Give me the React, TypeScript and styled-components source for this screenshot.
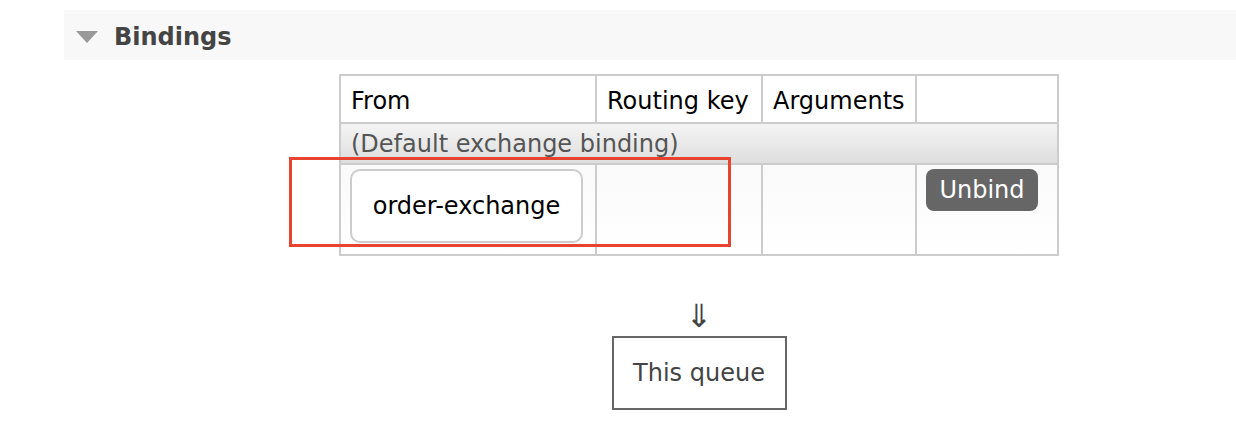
import styled, { createGlobalStyle } from "styled-components";

const GlobalStyle = createGlobalStyle`
  html, body {
    margin: 0;
    padding: 0;
    background: #ffffff;
    overflow: hidden;
  }
  body {
    font-family: "DejaVu Sans", Verdana, sans-serif;
    font-size: 24px;
    color: #000;
  }
`;

const Section = styled.section`
  margin: 10px 0 0 64px;
`;

const SectionHeader = styled.h2`
  display: flex;
  align-items: center;
  gap: 16px;
  margin: 0;
  box-sizing: border-box;
  height: 50px;
  padding: 4px 12px 0;
  background: #f8f8f8;
  color: #444;
  font-size: 24px;
  font-weight: bold;
`;

const Toggle = styled.span`
  width: 0;
  height: 0;
  border-left: 11px solid transparent;
  border-right: 11px solid transparent;
  border-top: 12px solid #999;
  margin-top: 0;
`;

const Body = styled.div`
  display: flex;
  flex-direction: column;
  align-items: center;
  padding: 14px 0 0 98px;
`;

const TableWrap = styled.div`
  position: relative;
`;

const Table = styled.table`
  border-collapse: collapse;
  border: 2px solid #ccc;
`;

const HeadCell = styled.th<{ $w: number }>`
  width: ${(p) => p.$w}px;
  box-sizing: border-box;
  border: 2px solid #ccc;
  height: 48px;
  padding: 4px 10px 0;
  text-align: left;
  font-weight: normal;
  background: #fff;
  white-space: nowrap;
`;

const GroupCell = styled.td`
  height: 39px;
  padding: 0 10px;
  border: 2px solid #ccc;
  color: #555;
  background: linear-gradient(#f4f4f4, #dedede);
`;

const DataRow = styled.tr`
  background: linear-gradient(#fafafa, #fff);
`;

const DataCell = styled.td`
  border: 2px solid #ccc;
  vertical-align: top;
  padding: 4px 9px 8px;
  height: 77px;
`;

const ExchangeBox = styled.div`
  box-sizing: border-box;
  width: 233px;
  height: 74px;
  display: flex;
  align-items: center;
  justify-content: center;
  border: 2px solid #ccc;
  border-radius: 10px;
  background: #fff;
`;

const UnbindButton = styled.button`
  box-sizing: border-box;
  width: 112px;
  height: 42px;
  border: none;
  border-radius: 8px;
  background: #666;
  color: #fff;
  font-family: inherit;
  font-size: 24px;
  padding: 0;
`;

const Highlight = styled.div`
  position: absolute;
  left: -50px;
  top: 83px;
  width: 442px;
  height: 90px;
  box-sizing: border-box;
  border: 3px solid #e8432e;
  pointer-events: none;
`;

const Arrow = styled.div`
  margin-top: 40px;
  font-size: 32px;
  line-height: 40px;
  color: #444;
`;

const QueueBox = styled.div`
  box-sizing: border-box;
  width: 175px;
  height: 74px;
  display: flex;
  align-items: center;
  justify-content: center;
  border: 2px solid #666;
  color: #444;
`;

export default function App() {
  return (
    <>
      <GlobalStyle />
      <Section>
        <SectionHeader>
          <Toggle />
          Bindings
        </SectionHeader>
        <Body>
          <TableWrap>
            <Table>
              <thead>
                <tr>
                  <HeadCell $w={256}>From</HeadCell>
                  <HeadCell $w={166}>Routing key</HeadCell>
                  <HeadCell $w={154}>Arguments</HeadCell>
                  <HeadCell $w={142}></HeadCell>
                </tr>
              </thead>
              <tbody>
                <tr>
                  <GroupCell colSpan={4}>(Default exchange binding)</GroupCell>
                </tr>
                <DataRow>
                  <DataCell>
                    <ExchangeBox>order-exchange</ExchangeBox>
                  </DataCell>
                  <DataCell></DataCell>
                  <DataCell></DataCell>
                  <DataCell>
                    <UnbindButton>Unbind</UnbindButton>
                  </DataCell>
                </DataRow>
              </tbody>
            </Table>
            <Highlight />
          </TableWrap>
          <Arrow>⇓</Arrow>
          <QueueBox>This queue</QueueBox>
        </Body>
      </Section>
    </>
  );
}
